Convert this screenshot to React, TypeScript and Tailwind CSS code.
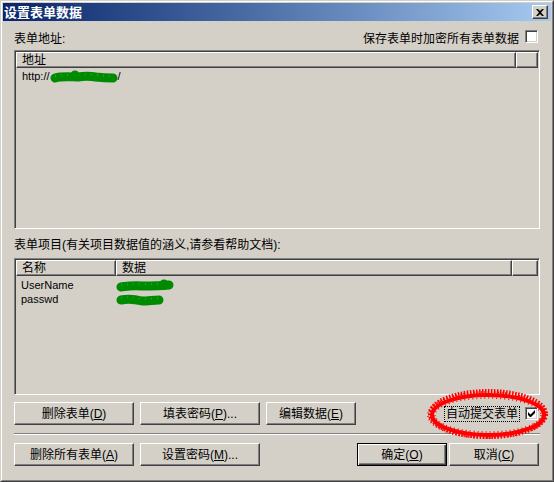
import type { ReactNode } from "react";

const raised =
  "border border-t-white border-l-white border-r-[#404040] border-b-[#404040] shadow-[inset_-1px_-1px_#808080]";
const sunken =
  "border border-t-[#808080] border-l-[#808080] border-r-white border-b-white shadow-[inset_1px_1px_#404040,inset_-1px_-1px_#d4d0c8]";

function Btn({ children, w, def }: { children: ReactNode; w: string; def?: boolean }) {
  const cls = def
    ? "border border-black shadow-[inset_1px_1px_#fff,inset_-1px_-1px_#404040,inset_-2px_-2px_#808080]"
    : raised;
  return (
    <button
      className={`h-[23px] ${w} ${cls} bg-[#d4d0c8] flex items-center justify-center text-[12px] leading-none text-black`}
    >
      {children}
    </button>
  );
}

function CheckBox({ checked }: { checked?: boolean }) {
  return (
    <span className={`w-[13px] h-[13px] bg-white ${sunken} inline-flex items-center justify-center`}>
      {checked && (
        <svg width="7" height="7" viewBox="0 0 7 7">
          <path d="M0 2v3l2 2h1l4-4V0L2.5 4.5z" fill="#000" />
        </svg>
      )}
    </span>
  );
}

function HeadCell({ children, w }: { children?: ReactNode; w: string }) {
  return (
    <div className={`h-[16px] ${w} ${raised} bg-[#d4d0c8] pl-[5px] flex items-center text-[12px] leading-none`}>
      {children}
    </div>
  );
}

// green scribble used to hide private data
function Blob({ w, h, d, bump }: { w: number; h: number; d: string; bump?: [number, number] }) {
  return (
    <svg width={w} height={h} viewBox={`0 0 ${w} ${h}`} className="inline-block align-middle">
      <path d={d} stroke="#008a00" strokeWidth="9" strokeLinecap="round" strokeLinejoin="round" fill="none" />
      <path d={d} stroke="#2aa02a" strokeWidth="2" strokeDasharray="1 5" fill="none" transform="translate(0 -2)" />
      {bump && <circle cx={bump[0]} cy={bump[1]} r="4.5" fill="#008a00" />}
    </svg>
  );
}

export default function App() {
  return (
    <div className="relative w-[554px] h-[482px] bg-[#d4d0c8] font-['Liberation_Sans','Noto_Sans_CJK_SC',sans-serif] text-black overflow-hidden">
      <div className="w-full h-full border border-t-[#d4d0c8] border-l-[#d4d0c8] border-r-[#404040] border-b-[#404040]">
        <div className="w-full h-full border border-t-white border-l-white border-r-[#808080] border-b-[#808080] p-px flex flex-col">
          {/* title bar */}
          <div className="h-[18px] shrink-0 bg-gradient-to-r from-[#0a246a] to-[#a6caf0] flex items-center pl-[1px] pr-[3px]">
            <span className="text-white font-bold text-[13px] leading-none">设置表单数据</span>
            <button className={`ml-auto w-[16px] h-[14px] bg-[#d4d0c8] ${raised} flex items-center justify-center`}>
              <svg width="8" height="7" viewBox="0 0 8 7">
                <path d="M0 0h2l2 2 2-2h2L5 3.5 8 7H6L4 5 2 7H0l3-3.5z" fill="#000" />
              </svg>
            </button>
          </div>

          <div className="flex-1 flex flex-col px-[11px] pt-[10px]">
            <div className="h-[16px] flex items-center text-[12px]">
              <span>表单地址:</span>
              <span className="ml-auto mr-[6px]">保存表单时加密所有表单数据</span>
              <span className="mr-[2px]">
                <CheckBox />
              </span>
            </div>

            <div className={`mt-[3px] h-[179px] ${sunken} p-px flex flex-col`}>
              <div className="flex">
                <HeadCell w="w-[500px]">地址</HeadCell>
                <HeadCell w="w-[22px]" />
              </div>
              <div className="pl-[6px] h-[14px] flex items-center text-[11px] leading-none mt-[1px]">
                <span>http://</span>
                <Blob
                  w={68}
                  h={13}
                  d="M5 8 C 12 6, 20 7, 28 7 C 34 6, 40 6, 46 7 C 54 8, 60 8, 63 8"
                  bump={[25, 5]}
                />
                <span>/</span>
              </div>
            </div>

            <div className="mt-[8px] h-[16px] flex items-center text-[12px]">
              表单项目(有关项目数据值的涵义,请参看帮助文档):
            </div>

            <div className={`mt-[5px] h-[137px] ${sunken} p-px flex flex-col`}>
              <div className="flex">
                <HeadCell w="w-[100px]">名称</HeadCell>
                <HeadCell w="w-[396px]">数据</HeadCell>
                <HeadCell w="w-[26px]" />
              </div>
              <div className="flex h-[14px] items-center text-[11px] leading-none mt-[2px]">
                <span className="w-[100px] pl-[5px]">UserName</span>
                <Blob w={58} h={13} d="M5 8 C 12 7, 18 6, 26 7 C 36 7, 44 7, 53 6" bump={[48, 5]} />
              </div>
              <div className="flex h-[14px] items-center text-[11px] leading-none">
                <span className="w-[100px] pl-[5px]">passwd</span>
                <Blob w={48} h={13} d="M5 7 C 10 6, 18 6, 26 8 C 32 8, 38 7, 43 7" />
              </div>
            </div>

            <div className="mt-[7px] flex items-center gap-[6px]">
              <Btn w="w-[120px]">删除表单(<u>D</u>)</Btn>
              <Btn w="w-[120px]">填表密码(<u>P</u>)...</Btn>
              <Btn w="w-[90px]">编辑数据(<u>E</u>)</Btn>
              <div className="ml-auto flex items-center gap-[5px] mr-[2px]">
                <span className="h-[16px] px-[1px] border border-dotted border-black flex items-center text-[12px] leading-none">
                  自动提交表单
                </span>
                <CheckBox checked />
              </div>
            </div>

            <div className="mt-[8px] h-[2px] border-t border-t-[#808080] border-b border-b-white" />

            <div className="mt-[8px] flex items-center gap-[6px]">
              <Btn w="w-[120px]">删除所有表单(<u>A</u>)</Btn>
              <Btn w="w-[120px]">设置密码(<u>M</u>)...</Btn>
              <div className="ml-auto flex gap-[2px] mr-[1px]">
                <Btn w="w-[90px]" def>
                  确定(<u>O</u>)
                </Btn>
                <Btn w="w-[90px]">取消(<u>C</u>)</Btn>
              </div>
            </div>
          </div>
        </div>
      </div>

      {/* red annotation */}
      <svg className="absolute left-[426px] top-[388px] pointer-events-none" width="126" height="54" viewBox="0 0 126 54">
        <ellipse cx="62" cy="27" rx="56" ry="20" fill="none" stroke="#ff0000" strokeWidth="4" />
        <ellipse cx="62" cy="26" rx="57" ry="22" fill="none" stroke="#ff0000" strokeWidth="6" strokeDasharray="1.5 1.5" />
        <ellipse cx="61" cy="27" rx="59" ry="23" fill="none" stroke="#ff0000" strokeWidth="2" strokeDasharray="1 2.5" />
        <ellipse cx="62" cy="27" rx="53" ry="17" fill="none" stroke="#ff0000" strokeWidth="1.5" strokeDasharray="1 3" />
      </svg>
    </div>
  );
}
